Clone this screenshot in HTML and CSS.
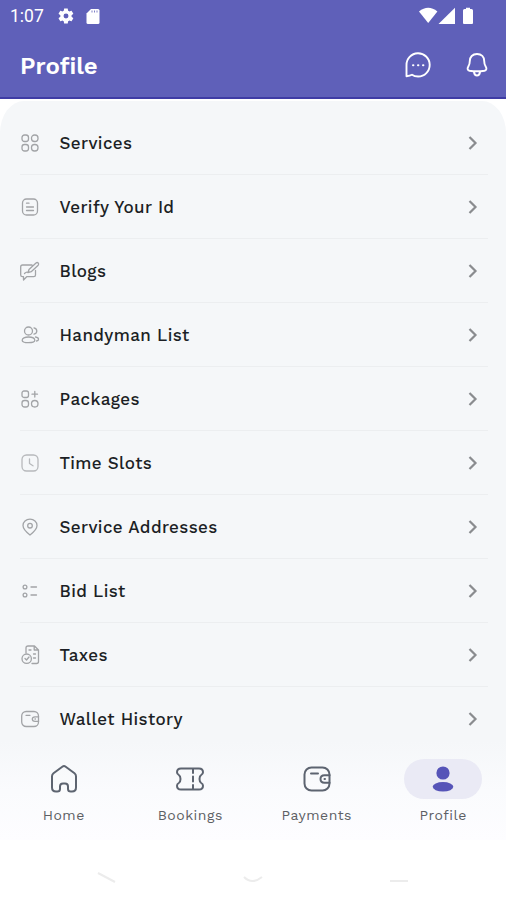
FILE: index.html
```html
<!DOCTYPE html>
<html lang="en">
<head>
    <meta charset="UTF-8">
    <meta name="viewport" content="width=device-width, initial-scale=1.0">
    <title>Profile</title>
    <link rel="stylesheet" href="styles.css">
</head>
<body>
    <header class="header">
        <div class="status-bar">
            <span class="time">1:07</span>
            <svg class="gear" width="18" height="18" viewBox="0 0 24 24"><path fill="#fff" fill-rule="evenodd" d="M19.4 13a7.500 7.500 0 0 0 0-2l2.100-1.600c.2-.2.300-.4.100-.7l-2-3.400c-.1-.2-.4-.3-.6-.2l-2.500 1a7 7 0 0 0-1.700-1l-.4-2.600c0-.3-.2-.5-.5-.5h-4c-.3 0-.5.200-.5.500L9 5.100a7 7 0 0 0-1.700 1l-2.500-1c-.2-.1-.5 0-.6.200l-2 3.400c-.1.300-.1.500.1.700L4.500 11a7.500 7.500 0 0 0 0 2l-2.200 1.600c-.2.200-.2.400-.1.700l2 3.400c.1.200.4.300.6.200l2.500-1a7 7 0 0 0 1.700 1l.4 2.600c0 .3.200.5.500.5h4c.3 0 .5-.2.500-.5l.4-2.600a7 7 0 0 0 1.700-1l2.500 1c.2.100.5 0 .6-.2l2-3.400c.2-.3.100-.5-.1-.7zM12 8.700a3.300 3.300 0 1 1 0 6.600 3.300 3.300 0 0 1 0-6.600z"/></svg>
            <svg class="sd-card" width="14" height="17" viewBox="0 0 14 17"><path fill="#fff" d="M5 1h7q1.500 0 1.500 1.500v12q0 1.500-1.500 1.500H2Q.5 16 .5 14.500V5.500z"/><path stroke="#5f60b9" stroke-width=".8" d="M6 2.500v2M8.500 2.500v2M11 2.500v2"/></svg>
            <svg class="signals" width="56" height="18" viewBox="0 0 56 18"><g fill="#fff"><path d="M0 4.500Q9.200-3 18.400 4.500L9.200 16z"/><path d="M36 .8V17H19.500z"/><path d="M47 .8h4v1.300h1.500q1.500 0 1.500 1.500v12.400q0 1-1 1h-8q-1 0-1-1V3.600q0-1.500 1.500-1.500H47z"/></g></svg>
        </div>
        <div class="title-bar">
            <h1>Profile</h1>
            <svg class="chat" width="26" height="26" viewBox="0 0 26 26" fill="none" stroke="#fff" stroke-width="1.900" stroke-linecap="round" stroke-linejoin="round"><path d="M1.500 24.200V13.300A11.600 11.600 0 1 1 13.100 24.500Q9.500 24.500 7 22.800 5 24 1.500 24.200z"/><path stroke-width="2" d="M8 13.300h.4M13 13.300h.4M18 13.300h.4"/></svg>
            <svg width="22" height="26" viewBox="0 0 22 26" fill="none" stroke="#fff" stroke-width="1.900" stroke-linecap="round" stroke-linejoin="round"><path d="M11 2C6.500 2 3.800 5 3.800 9c0 3.500-.4 4-1.600 5.700-1.200 1.800-.6 3.600 1.300 4C8 19.400 14 19.400 18.500 18.700c1.900-.4 2.500-2.200 1.300-4C18.600 13 18.200 12.500 18.200 9c0-4-2.700-7-7.200-7zM8 20q.5 3.500 3 3.500t3-3.500"/></svg>
        </div>
    </header>

    <main class="menu">
        <a class="row">
            <svg class="icon" viewBox="0 0 20 20"><rect x="2" y="2" width="6.500" height="6.500" rx="2.500"/><rect x="11.500" y="2" width="6.500" height="6.500" rx="3"/><rect x="2" y="11.500" width="6.500" height="6.500" rx="2.500"/><rect x="11.500" y="11.500" width="6.500" height="6.500" rx="3"/></svg>
            <span>Services</span>
            <svg class="chevron" viewBox="0 0 10 16"><path d="M1.500 2l6 6-6 6"/></svg>
        </a>
        <a class="row">
            <svg class="icon" viewBox="0 0 20 20"><rect x="2.500" y="2" width="15" height="16" rx="4"/><path d="M6.500 6.200h2.500M6.500 10h7M6.500 13.500h7"/></svg>
            <span>Verify Your Id</span>
            <svg class="chevron" viewBox="0 0 10 16"><path d="M1.500 2l6 6-6 6"/></svg>
        </a>
        <a class="row">
            <svg class="icon" viewBox="0 0 20 20"><path d="M12 4H2.500Q.7 4 .7 6v8q0 1.700 1.800 1.700h1V19l3.200-3.300h7q1.800 0 1.800-1.700v-4.500M8 11.500l1-3 7-6.500q1.300-1 2.200 0t0 2.200l-7 6.500zM4.500 12.500q2-2 3.500-1"/></svg>
            <span>Blogs</span>
            <svg class="chevron" viewBox="0 0 10 16"><path d="M1.500 2l6 6-6 6"/></svg>
        </a>
        <a class="row">
            <svg class="icon" viewBox="0 0 20 20"><circle cx="8.500" cy="6" r="4"/><path d="M8.500 12c-3.800 0-6.300 1.300-6.300 3.200s2.300 2.500 6.300 2.500 6.300-.6 6.300-2.500S12.300 12 8.500 12zM14 2.800q2.800.7 2.800 3.200T14 9.200M15.500 12q3 .5 3 2.200T16.500 16"/></svg>
            <span>Handyman List</span>
            <svg class="chevron" viewBox="0 0 10 16"><path d="M1.500 2l6 6-6 6"/></svg>
        </a>
        <a class="row">
            <svg class="icon" viewBox="0 0 20 20"><rect x="2" y="2" width="6.500" height="6.500" rx="2"/><rect x="2" y="11.500" width="6.500" height="6.500" rx="2.500"/><rect x="11.500" y="11.500" width="6.500" height="6.500" rx="3.200"/><path d="M14.800 2.500v5.500M12 5.200h5.500"/></svg>
            <span>Packages</span>
            <svg class="chevron" viewBox="0 0 10 16"><path d="M1.500 2l6 6-6 6"/></svg>
        </a>
        <a class="row">
            <svg class="icon light" viewBox="0 0 20 20"><rect x="2" y="2" width="16" height="16" rx="4.500"/><path d="M9.500 6v4.500l3.500 2.300"/></svg>
            <span>Time Slots</span>
            <svg class="chevron" viewBox="0 0 10 16"><path d="M1.500 2l6 6-6 6"/></svg>
        </a>
        <a class="row">
            <svg class="icon" viewBox="0 0 20 20"><path d="M10 18Q3 12.500 3 8.500C3 4.800 6 2.200 10 2.200s7 2.600 7 6.300Q17 12.500 10 18z"/><circle cx="10" cy="8.700" r="2.300"/></svg>
            <span>Service Addresses</span>
            <svg class="chevron" viewBox="0 0 10 16"><path d="M1.500 2l6 6-6 6"/></svg>
        </a>
        <a class="row">
            <svg class="icon" viewBox="0 0 20 20"><circle cx="5" cy="6" r="1.900"/><circle cx="5" cy="14" r="1.900"/><path d="M11 6h5.500M11 14h5.500"/></svg>
            <span>Bid List</span>
            <svg class="chevron" viewBox="0 0 10 16"><path d="M1.500 2l6 6-6 6"/></svg>
        </a>
        <a class="row">
            <svg class="icon" viewBox="0 0 20 20"><path d="M6 8V3q0-2 2-2h6.500L18.500 5v11.500q0 2-2 2H12M14.200 1.200V5h4M9 5h2M13.500 9h2M13.500 13h2"/><circle cx="6.700" cy="13.700" r="4.700"/><path d="M5 13.500l1.500 1.500 2.500-3"/></svg>
            <span>Taxes</span>
            <svg class="chevron" viewBox="0 0 10 16"><path d="M1.500 2l6 6-6 6"/></svg>
        </a>
        <a class="row">
            <svg class="icon" viewBox="0 0 20 20"><rect x="1.700" y="2.500" width="16.800" height="15" rx="4.500"/><path d="M6 6.300h4M18.500 7.800H15q-2.700 0-2.700 2.300t2.700 2.300h3.500M15 10h.4"/></svg>
            <span>Wallet History</span>
            <svg class="chevron" viewBox="0 0 10 16"><path d="M1.500 2l6 6-6 6"/></svg>
        </a>
    </main>

    <nav class="bottom-nav">
        <a class="tab">
            <div class="pill"><svg width="28" height="30" viewBox="0 0 28 30"><path d="M12.300 2.700L3.500 9.300Q2 10.500 2 12.200V23.500q0 4 4 4h1.200q2.800 0 2.800-2.500v-2.500q0-3 3-3h2q3 0 3 3V25q0 2.500 2.800 2.500H22q4 0 4-4V12.200q0-1.700-1.500-2.900l-8.800-6.600q-1.700-1.200-3.400 0z"/></svg></div>
            <span>Home</span>
        </a>
        <a class="tab">
            <div class="pill"><svg width="30" height="26" viewBox="0 0 30 26"><path d="M6 2.500h18q4 0 4 3.800 0 1.700-1.800 2.700-1.700 1-1.700 4t1.700 4q1.800 1 1.800 2.700 0 3.800-4 3.800H6q-4 0-4-3.800Q2 18 3.800 17q1.700-1 1.700-4T3.800 9Q2 8 2 6.300 2 2.500 6 2.500zM18 3v4M18 10.500v5M18 19v4"/></svg></div>
            <span>Bookings</span>
        </a>
        <a class="tab">
            <div class="pill"><svg width="28" height="28" viewBox="0 0 28 28"><rect x="1.500" y="2.500" width="25" height="23" rx="7"/><path d="M8 8.500h7M26.500 10.200h-5Q17.500 10.200 17.500 14t4 3.800h5M21.500 14h.5"/></svg></div>
            <span>Payments</span>
        </a>
        <a class="tab">
            <div class="pill active"><svg width="22" height="26" viewBox="0 0 22 26"><circle cx="11" cy="7" r="6.600"/><ellipse cx="11" cy="20.800" rx="10.300" ry="4.800"/></svg></div>
            <span>Profile</span>
        </a>
    </nav>

    <!-- system navigation, nearly invisible on white -->
    <div class="system-nav">
        <svg width="20" height="14" viewBox="0 0 20 14"><path d="M2 2l17 9"/></svg>
        <svg width="20" height="14" viewBox="0 0 20 14"><path d="M1 6q8 8 18 0"/></svg>
        <svg width="20" height="14" viewBox="0 0 20 14"><path d="M1 10h18"/></svg>
    </div>
</body>
</html>
```

FILE: styles.css
```css
* {
    box-sizing: border-box;
}
body {
    font-family: 'Work Sans', Inter, 'Liberation Sans', sans-serif;
    margin: 0;
    height: 900px;
    background-color: #fff;
    display: flex;
    flex-direction: column;
    overflow: hidden;
}
.header {
    height: 99px;
    flex-shrink: 0;
    background-color: #5f60b9;
    border-bottom: 2px solid #3f3ca5;
    color: #fff;
}
.status-bar {
    display: flex;
    align-items: center;
    height: 32px;
    padding: 0 31px 0 10px;
}
.time {
    width: 47px;
    font-family: Roboto, sans-serif;
    font-size: 17.5px;
}
.sd-card {
    margin-left: 11px;
}
.signals {
    margin-left: auto;
    margin-bottom: 1px;
}
.title-bar {
    display: flex;
    align-items: center;
    height: 66px;
    padding: 0 18px 0 20px;
}
.title-bar h1 {
    margin: 1px auto 0 0;
    font-size: 24px;
    font-weight: 600;
}
.chat {
    margin-right: 35px;
}
.menu {
    flex: 0 0 640px;
    height: 640px;
    margin-top: 2px;
    padding: 10px 18px 0 20px;
    background-color: #f5f7f9;
    border-radius: 24px 24px 0 0 / 32px 32px 0 0;
    overflow: hidden;
}
.row {
    display: flex;
    align-items: center;
    height: 64px;
    padding-right: 10px;
    border-bottom: 1px solid #eceef0;
    font-size: 17px;
    font-weight: 500;
    color: #1c1f25;
}
.row:last-child {
    border-bottom: none;
}
.row span {
    flex: 1;
    margin-left: 19.5px;
    letter-spacing: 0.38px;
}
.icon {
    width: 20px;
    height: 20px;
    fill: none;
    stroke: #a2a4a7;
    stroke-width: 1.3;
    stroke-linecap: round;
    stroke-linejoin: round;
}
.icon.light {
    stroke: #b7b9bc;
}
.chevron {
    width: 10px;
    height: 16px;
    fill: none;
    stroke: #8a8c8f;
    stroke-width: 2.2;
}
.bottom-nav {
    display: grid;
    grid-template-columns: repeat(4, 1fr);
    flex-shrink: 0;
    height: 99px;
    padding-top: 18px;
    background: linear-gradient(#f5f7f9, #fafbfd 50%, #fdfdff);
}
.tab {
    display: flex;
    flex-direction: column;
    align-items: center;
    padding-left: 1px;
    font-size: 14px;
    color: #5d6064;
}
.tab span {
    margin-top: 8px;
    line-height: 17px;
    letter-spacing: 0.5px;
}
.pill {
    display: flex;
    align-items: center;
    justify-content: center;
    width: 78px;
    height: 40px;
    border-radius: 20px;
}
.pill svg {
    fill: none;
    stroke: #5d6470;
    stroke-width: 2;
    stroke-linecap: round;
    stroke-linejoin: round;
}
.pill.active {
    background-color: #eaeaf5;
}
.pill.active svg {
    fill: #5654b8;
    stroke: none;
}
.system-nav {
    display: flex;
    justify-content: space-between;
    padding: 31px 97px 0 96px;
}
.system-nav svg {
    fill: none;
    stroke: #ececec;
    stroke-width: 2;
}
```
